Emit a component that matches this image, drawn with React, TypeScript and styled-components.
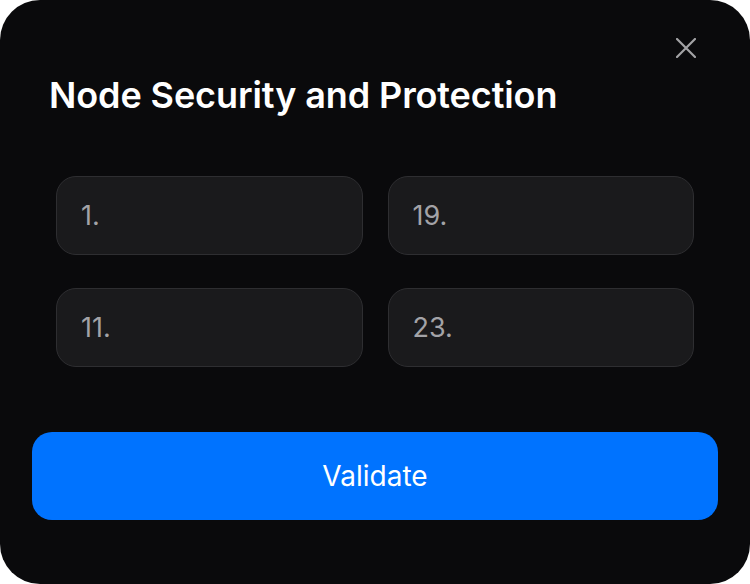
import React, { useState } from "react";
import styled, { createGlobalStyle } from "styled-components";

const GlobalStyle = createGlobalStyle`
  html, body {
    margin: 0;
    padding: 0;
    background: #ffffff;
  }
  * {
    box-sizing: border-box;
  }
`;

const Modal = styled.div`
  position: relative;
  width: 750px;
  height: 584px;
  background: #0a0a0c;
  border-radius: 40px;
  padding: 73px 32px 0;
  font-family: Inter, "Noto Sans", sans-serif;
  display: flex;
  flex-direction: column;
`;

const CloseButton = styled.button`
  position: absolute;
  top: 36px;
  right: 52px;
  width: 24px;
  height: 24px;
  padding: 0;
  border: none;
  background: transparent;
  cursor: pointer;
  display: flex;
  align-items: center;
  justify-content: center;
`;

const Title = styled.h2`
  margin: 0 0 0 17px;
  font-size: 36px;
  line-height: 44px;
  font-weight: 600;
  color: #ffffff;
  letter-spacing: -0.1px;
`;

const WordGrid = styled.div`
  display: grid;
  grid-template-columns: 1fr 1fr;
  column-gap: 25px;
  row-gap: 33px;
  margin: 59px 24px 0;
`;

const WordInput = styled.input`
  width: 100%;
  height: 79px;
  padding: 0 24px;
  background: #1a1a1c;
  border: 1.5px solid #2e2e31;
  border-radius: 20px;
  color: #ffffff;
  font-family: inherit;
  font-size: 27px;
  outline: none;

  &::placeholder {
    color: #a3a3a7;
  }
`;

const ValidateButton = styled.button`
  margin-top: 65px;
  height: 88px;
  width: 100%;
  border: none;
  border-radius: 20px;
  background: #0073ff;
  color: #ffffff;
  font-family: inherit;
  font-size: 28px;
  font-weight: 400;
  cursor: pointer;
`;

const slots = ["1.", "19.", "11.", "23."];

export default function App() {
  const [words, setWords] = useState<string[]>(slots.map(() => ""));

  return (
    <>
      <GlobalStyle />
      <Modal>
        <CloseButton aria-label="Close">
          <svg width="20" height="20" viewBox="0 0 20 20" fill="none">
            <path d="M1 1L19 19M19 1L1 19" stroke="#a3a3a6" strokeWidth="2.2" strokeLinecap="round" />
          </svg>
        </CloseButton>
        <Title>Node Security and Protection</Title>
        <WordGrid>
          {slots.map((slot, i) => (
            <WordInput
              key={slot}
              placeholder={slot}
              value={words[i]}
              onChange={e => {
                const next = [...words];
                next[i] = e.target.value;
                setWords(next);
              }}
            />
          ))}
        </WordGrid>
        <ValidateButton>Validate</ValidateButton>
      </Modal>
    </>
  );
}
